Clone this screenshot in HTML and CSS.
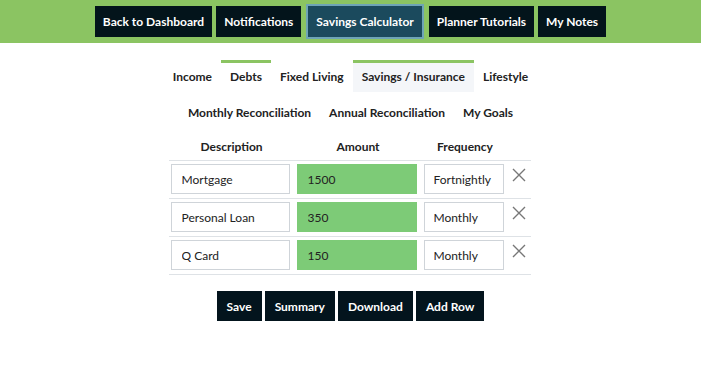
FILE: index.html
```html
<!DOCTYPE html>
<html lang="en">
<head>
<meta charset="utf-8">
<title>Savings Calculator - Debts</title>
<link rel="stylesheet" href="styles.css">
</head>
<body>
<header class="topbar">
  <nav class="topnav">
    <a class="topbtn" href="#">Back to Dashboard</a>
    <a class="topbtn" href="#">Notifications</a>
    <a class="topbtn active" href="#">Savings Calculator</a>
    <a class="topbtn" href="#">Planner Tutorials</a>
    <a class="topbtn" href="#">My Notes</a>
  </nav>
</header>
<main class="content">
  <ul class="tabs">
    <li class="tab">Income</li>
    <li class="tab current">Debts</li>
    <li class="tab">Fixed Living</li>
    <li class="tab current hover">Savings / Insurance</li>
    <li class="tab">Lifestyle</li>
  </ul>
  <ul class="tabs tabs-second">
    <li class="tab">Monthly Reconciliation</li>
    <li class="tab">Annual Reconciliation</li>
    <li class="tab">My Goals</li>
  </ul>
  <table class="grid">
    <thead>
      <tr>
        <th>Description</th>
        <th>Amount</th>
        <th>Frequency</th>
        <th></th>
      </tr>
    </thead>
    <tbody>
      <tr>
        <td><input class="field desc" type="text" value="Mortgage"></td>
        <td><input class="field amount" type="text" value="1500"></td>
        <td><select class="field freq"><option>Fortnightly</option><option>Monthly</option></select></td>
        <td class="del"><svg class="x" viewBox="0 0 14 14" width="14" height="14"><path d="M1 1L13 13M13 1L1 13"/></svg></td>
      </tr>
      <tr>
        <td><input class="field desc" type="text" value="Personal Loan"></td>
        <td><input class="field amount" type="text" value="350"></td>
        <td><select class="field freq"><option>Monthly</option><option>Fortnightly</option></select></td>
        <td class="del"><svg class="x" viewBox="0 0 14 14" width="14" height="14"><path d="M1 1L13 13M13 1L1 13"/></svg></td>
      </tr>
      <tr>
        <td><input class="field desc" type="text" value="Q Card"></td>
        <td><input class="field amount" type="text" value="150"></td>
        <td><select class="field freq"><option>Monthly</option><option>Fortnightly</option></select></td>
        <td class="del"><svg class="x" viewBox="0 0 14 14" width="14" height="14"><path d="M1 1L13 13M13 1L1 13"/></svg></td>
      </tr>
    </tbody>
  </table>
  <div class="actions">
    <button class="btn">Save</button>
    <button class="btn">Summary</button>
    <button class="btn">Download</button>
    <button class="btn">Add Row</button>
  </div>
</main>
</body>
</html>
```
FILE: styles.css
```css
* { box-sizing: border-box; }
body {
  margin: 0;
  font-family: Lato, "Open Sans", sans-serif;
  color: #222;
  background: #fff;
}
.topbar {
  background: #8bc462;
  height: 43px;
  padding-top: 6px;
}
.topnav {
  display: flex;
  justify-content: center;
  gap: 4px;
}
.topbtn {
  display: block;
  height: 31px;
  line-height: 31px;
  padding: 0 8px;
  background: #03141b;
  color: #fff;
  font-size: 12px;
  font-weight: 700;
  text-decoration: none;
}
.topbtn.active {
  background: #1b4a5d;
  border: 2px solid #6ea4b6;
  height: 35px;
  line-height: 31px;
  margin: -2px 1px 0;
  padding: 0 8px;
}
.content {
  padding-top: 17px;
}
.tabs {
  list-style: none;
  margin: 0;
  padding: 0;
  display: flex;
  justify-content: center;
}
.tabs-second {
  margin-top: 4px;
}
.tab {
  border-top: 3px solid transparent;
  padding: 5px 9px 6px;
  line-height: 18px;
  font-size: 12px;
  font-weight: 700;
  color: #222;
}
.tab.current { border-top-color: #8bc462; }
.tab.hover { background: #f4f6f9; }
.grid {
  margin: 3px auto 0;
  border-collapse: collapse;
  position: relative;
  left: -1px;
}
.grid th {
  font-size: 12px;
  font-weight: 700;
  line-height: 18px;
  padding: 7px 0 4px;
  text-align: center;
  border-bottom: 1px solid #dee2e6;
}
.grid td {
  padding: 3px 5px 4px 2px;
  border-bottom: 1px solid #dee2e6;
  vertical-align: top;
}
.field {
  display: block;
  height: 30px;
  padding: 0 10px;
  border: 1px solid #cfd4d9;
  background: #fff;
  font-family: Lato, "Open Sans", sans-serif;
  font-size: 12px;
  color: #222;
  border-radius: 0;
  outline: none;
}
.desc { width: 119px; }
.amount {
  width: 120px;
  background: #7dcb77;
  border-color: #7dcb77;
}
.freq {
  width: 80px;
  appearance: none;
  -webkit-appearance: none;
  padding: 0 9px;
}
.grid td.del {
  width: 22px;
  padding: 7px 0 0 3px;
}
.x {
  display: block;
  fill: none;
  stroke: #777;
  stroke-width: 1.4;
}
.actions {
  display: flex;
  justify-content: center;
  gap: 3px;
  margin-top: 16px;
}
.btn {
  height: 30px;
  padding: 0 10px;
  border: 0;
  background: #03141d;
  color: #fff;
  font-family: Lato, "Open Sans", sans-serif;
  font-size: 12px;
  font-weight: 700;
  border-radius: 0;
}
```
